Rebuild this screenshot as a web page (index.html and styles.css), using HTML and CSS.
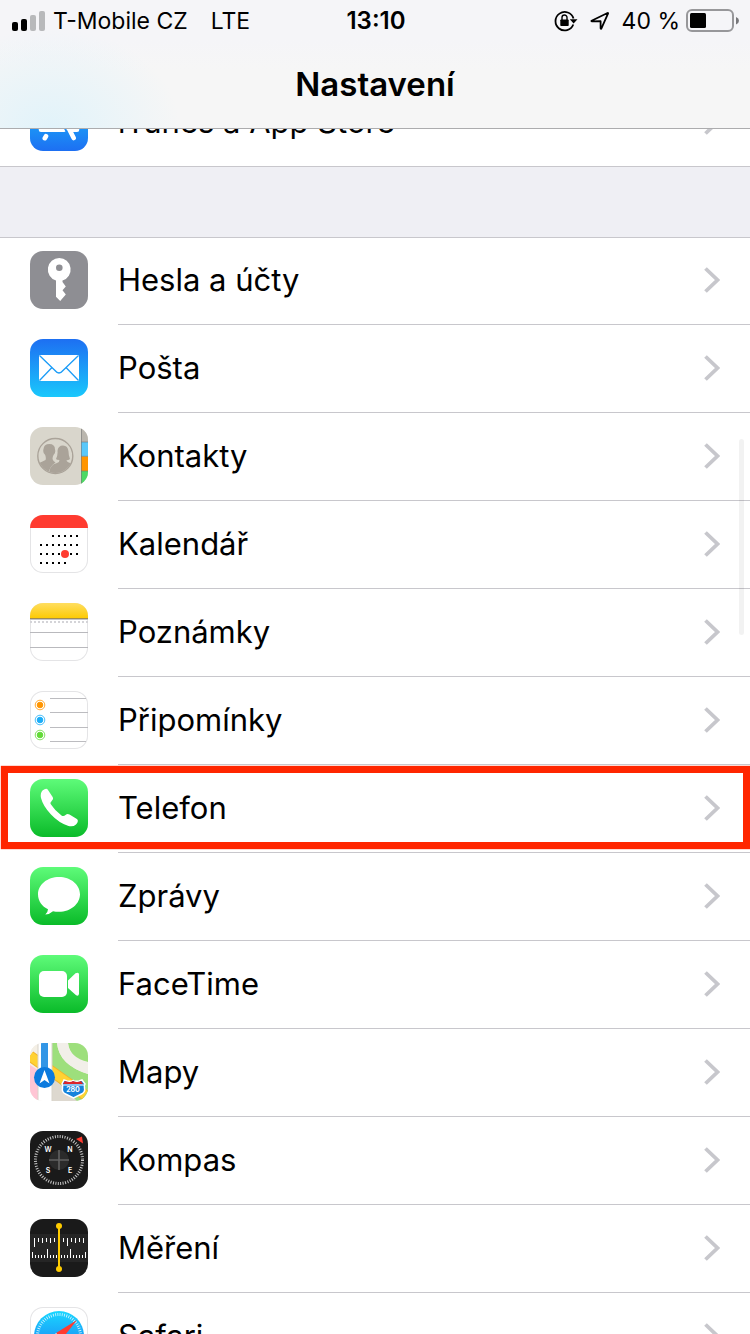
FILE: index.html
```html
<!DOCTYPE html>
<html lang="cs">
<head>
<meta charset="utf-8">
<meta name="viewport" content="width=device-width">
<title>Nastavení</title>
<link rel="stylesheet" href="styles.css">
</head>
<body>
<svg class="defs" width="0" height="0" aria-hidden="true">
  <defs>
    <linearGradient id="green" x2="0" y2="1"><stop stop-color="#5efb79"/><stop offset="1" stop-color="#0abb29"/></linearGradient>
    <linearGradient id="mail" x2="0" y2="1"><stop stop-color="#1d6ff2"/><stop offset="1" stop-color="#1ac8fc"/></linearGradient>
    <linearGradient id="store" x2="0" y2="1"><stop stop-color="#1ac8fc"/><stop offset="1" stop-color="#1d6ff2"/></linearGradient>
    <linearGradient id="yellow" x2="0" y2="1"><stop stop-color="#ffde60"/><stop offset="1" stop-color="#fdca02"/></linearGradient>
    <linearGradient id="safari" x2="0" y2="1"><stop stop-color="#19d7ff"/><stop offset="1" stop-color="#1e6ff1"/></linearGradient>
    <symbol id="chevron" viewBox="0 0 16 26"><path d="M1.500 1.500L13.500 13 1.500 24.500" fill="none" stroke="#c7c7cc" stroke-width="3.800"/></symbol>
  </defs>
</svg>

<header class="header">
  <div class="status">
    <div class="status-left">
      <svg width="34" height="20" viewBox="0 0 34 20" aria-hidden="true">
        <rect y="11" width="6" height="9" rx="2"/><rect x="9" y="8" width="6" height="12" rx="2"/>
        <rect x="18" y="4" width="6" height="16" rx="2" fill="#b8b9bb"/><rect x="27" width="6" height="20" rx="2" fill="#b8b9bb"/>
      </svg>
      <span>T-Mobile CZ</span>
      <span class="network">LTE</span>
    </div>
    <time class="time">13:10</time>
    <div class="status-right">
      <svg width="24" height="22" viewBox="0 0 24 22" aria-hidden="true">
        <path d="M19.300 14.500A9.200 9.200 0 1 1 19.500 8.500" fill="none" stroke="#000" stroke-width="1.800"/>
        <path d="M15.800 9.200H23.500L19.600 13.600Z"/>
        <rect x="6.300" y="9.500" width="8.400" height="6.500" rx=".8"/>
        <path d="M8 10V7.500a2.500 2.500 0 0 1 5 0V10" fill="none" stroke="#000" stroke-width="1.400"/>
      </svg>
      <svg class="locate" width="20" height="20" viewBox="0 0 20 20" aria-hidden="true">
        <path d="M1.600 9.700L17.500 2Q18.400 1.700 18 2.700L11.300 17.600Q10.700 18.200 10.600 17.200V10.200L2 10.400Q1 10.200 1.600 9.700Z" fill="none" stroke="#000" stroke-width="1.800" stroke-linejoin="round"/>
      </svg>
      <span>40 %</span>
      <svg class="battery" width="54" height="24" viewBox="0 0 54 24" aria-hidden="true">
        <rect x="1" y="1" width="46" height="21" rx="5" fill="none" stroke="#97979a" stroke-width="2"/>
        <rect x="4" y="4" width="16" height="15" rx="1.500"/>
        <path d="M50 8q3 1.200 3 3.700t-3 3.700z" fill="#77777a"/>
      </svg>
    </div>
  </div>
  <h1 class="title">Nastavení</h1>
</header>

<main class="content">
  <ul class="list list-cut">
    <li><a class="row" href="#store">
      <svg class="icon" viewBox="0 0 58 58"><rect width="58" height="58" fill="url(#store)"/><g stroke="#fff" stroke-width="4.600" stroke-linecap="round" fill="none"><path d="M11 36.800H34M42 36.800H47M32 10L18.500 33M16 43.200L14.800 45.200M26 10L43.700 45"/></g><path d="M33.500 33L38.500 43" stroke="#1d8bf6" stroke-width="1.500"/></svg>
      <span class="label">iTunes a App Store</span><svg class="chevron"><use href="#chevron"/></svg></a></li>
  </ul>

  <ul class="list list-main">
    <li><a class="row" href="#hesla">
      <svg class="icon" viewBox="0 0 58 58"><rect width="58" height="58" fill="#8e8e93"/><path d="M29.300 7a11.500 11.500 0 0 1 3.200 22.500v1.500l3.300 4.500-3.300 3.800 3.300 4.200-5.600 6.500-4.200-4.300V29.500A11.500 11.500 0 0 1 29.300 7Z" fill="#fff"/><circle cx="29.300" cy="16.700" r="3.300" fill="#8e8e93"/></svg>
      <span class="label">Hesla a účty</span><svg class="chevron"><use href="#chevron"/></svg></a></li>
    <li><a class="row" href="#posta">
      <svg class="icon" viewBox="0 0 58 58"><rect width="58" height="58" fill="url(#mail)"/><rect x="9" y="16" width="40" height="26" rx="1" fill="#fff"/><path d="M9.500 16.500L25 31.500Q29 36.500 33 31.500L48.500 16.500M9.500 41.500L21.500 29M48.500 41.500L36.500 29" fill="none" stroke="#1c9cf7" stroke-width="1.300"/></svg>
      <span class="label">Pošta</span><svg class="chevron"><use href="#chevron"/></svg></a></li>
    <li><a class="row" href="#kontakty">
      <svg class="icon" viewBox="0 0 58 58"><rect width="58" height="58" fill="#d9d6cc"/><path d="M51 0h7v15h-7z" fill="#bab6ae"/><path d="M51 15h7v14.500h-7z" fill="#5ac8fa"/><path d="M51 29.500h7v14.500h-7z" fill="#ff9500"/><path d="M51 44h7v14h-7z" fill="#4cd964"/><path d="M51.500 0V58M51 15h7M51 29.300h7M51 44h7" stroke="#777" stroke-opacity=".6"/>
        <clipPath id="people"><circle cx="25.300" cy="29" r="17"/></clipPath>
        <g clip-path="url(#people)" fill="#aaa399"><path d="M7 37Q13 34.500 15.500 33 16.300 31 15.200 28 12.500 26 13.500 22 14 17 19.300 17q5.700 0 5.700 5.500 1 3-1.500 5.500-1 2-1 4 1 3 3 3.500Q19 40 18.500 47L7 46Z"/><path d="M19 47q0-9 8-11 2.500-.7 2.500-3-3 0-3.500-1 2-4 1.500-8 .5-5.500 5.500-5.500t5.500 6q0 4 1.500 7.500-1.500 1.200-3.500 1.300 0 2 6.500 3.700V47z"/></g><circle cx="25.300" cy="29" r="17.500" fill="none" stroke="#aaa399" stroke-width="1.400"/></svg>
      <span class="label">Kontakty</span><svg class="chevron"><use href="#chevron"/></svg></a></li>
    <li><a class="row" href="#kalendar">
      <svg class="icon icon-light" viewBox="0 0 58 58"><path d="M0 0h58v13H0z" fill="#ff3b30"/><g stroke="#000" stroke-width="2" stroke-dasharray="2 4"><path d="M22 21H48M10 30H48M10 39H48M10 48H36"/></g><circle cx="35" cy="39" r="4" fill="#ff3b30"/></svg>
      <span class="label">Kalendář</span><svg class="chevron"><use href="#chevron"/></svg></a></li>
    <li><a class="row" href="#poznamky">
      <svg class="icon icon-light" viewBox="0 0 58 58"><path d="M0 0h58v15.500H0z" fill="url(#yellow)"/><path d="M0 15.500H58" stroke="#a08c50"/><path d="M0 16.500H58" stroke="#c4c4c8"/><path d="M0 19H58" stroke="#d4d4d8" stroke-width="2" stroke-dasharray="2 2"/><path d="M0 29.500H58M0 44.500H58" stroke="#b9b9bd"/></svg>
      <span class="label">Poznámky</span><svg class="chevron"><use href="#chevron"/></svg></a></li>
    <li><a class="row" href="#pripominky">
      <svg class="icon icon-light" viewBox="0 0 58 58"><path d="M20 7.500H56M20 21.500H58M20 36.500H58M20 50.500H56" stroke="#bcbcc0"/><g fill="#ff9500" stroke="#ff9500"><circle cx="10" cy="14" r="2.800"/><circle cx="10" cy="14" r="4.800" fill="none" stroke-width=".8"/></g><g fill="#1badf8" stroke="#1badf8"><circle cx="10" cy="29" r="2.800"/><circle cx="10" cy="29" r="4.800" fill="none" stroke-width=".8"/></g><g fill="#63da38" stroke="#63da38"><circle cx="10" cy="44" r="2.800"/><circle cx="10" cy="44" r="4.800" fill="none" stroke-width=".8"/></g></svg>
      <span class="label">Připomínky</span><svg class="chevron"><use href="#chevron"/></svg></a></li>
    <li><a class="row row-marked" href="#telefon">
      <svg class="icon" viewBox="0 0 58 58"><rect width="58" height="58" fill="url(#green)"/><path d="M12.500 11.500Q16.500 8.500 18 11L22.800 18.200Q23.700 20 22 21.500 19.800 23.500 21 25.500 25 31.800 31.500 36.500 33.700 37.800 35.500 36 37.300 34.300 39.500 35.500L46.500 39.700Q49.500 41.500 46 45.500 43 48.200 38.500 47 29 44 21 35.500 13 27 11 19 10 14 12.500 11.500Z" fill="#fff"/></svg>
      <span class="label">Telefon</span><svg class="chevron"><use href="#chevron"/></svg></a></li>
    <li><a class="row" href="#zpravy">
      <svg class="icon" viewBox="0 0 58 58"><rect width="58" height="58" fill="url(#green)"/><path d="M29 10C40.500 10 50 17.500 50 27.300S40.500 44.800 29 44.800Q25.500 44.800 23 44.200 19.500 47.300 15.300 47.600 18 45 18 42.300C12 39.500 8 34 8 27.300 8 17.500 17.500 10 29 10Z" fill="#fff"/></svg>
      <span class="label">Zprávy</span><svg class="chevron"><use href="#chevron"/></svg></a></li>
    <li><a class="row" href="#facetime">
      <svg class="icon" viewBox="0 0 58 58"><rect width="58" height="58" fill="url(#green)"/><rect x="9" y="16" width="28" height="26" rx="5" fill="#fff"/><path d="M38 25.500L45.500 18.300Q49 16.500 49 19.500V38.500Q49 42 45.500 39.800L38 33Z" fill="#fff"/></svg>
      <span class="label">FaceTime</span><svg class="chevron"><use href="#chevron"/></svg></a></li>
    <li><a class="row" href="#mapy">
      <svg class="icon" viewBox="0 0 58 58"><rect width="58" height="58" fill="#f2efe9"/><path d="M0 0h8v58H0z" fill="#f4efe5"/><path d="M0 22l8 5v31H0z" fill="#ffc5d4"/><path d="M22 0H27Q29 22 58 31V58H40L22 46Z" fill="#9ddf7c"/><path d="M22 33L47 58H22Z" fill="#ddd8cf"/><path d="M38 0A20 20 0 0 0 58 19V0Z" fill="#9ddf7c"/><path d="M27 0Q29 22 58 31V19Q40 15 38 0Z" fill="#f2efe9"/><path d="M0 13L55 52" stroke="#f1b32a" stroke-width="11"/><path d="M0 13L55 52" stroke="#ffd233" stroke-width="9"/><path d="M8 0h14v58H8z" fill="#fff"/><path d="M8 0V58M22 0V58" stroke="#d8d3ca"/><path d="M11 0h7v34h-7z" fill="#3296e6"/><circle cx="14.500" cy="34.500" r="10.500" fill="#0b7ade"/><path d="M14.500 27l5 13.500-5-3.500-5 3.500z" fill="#fff"/><path d="M34 37l3 1q6 1 6-1 1 2 6 1l3-1 3 4q-1 1-.5 4 1 4-3 6l-8 4-8-4q-4-2-3-6 .5-3-.5-4z" fill="#1583dc" stroke="#fff" stroke-width="1.500"/><path d="M35 38q5 2 8 0 4 2 8 0l2 3H33z" fill="#dc2529"/><path d="M32.500 42H54" stroke="#fff" stroke-width="1.200"/><text x="43" y="49" class="shield">280</text></svg>
      <span class="label">Mapy</span><svg class="chevron"><use href="#chevron"/></svg></a></li>
    <li><a class="row" href="#kompas">
      <svg class="icon" viewBox="0 0 58 58"><rect width="58" height="58" fill="#1a1a1a"/><circle cx="29" cy="29" r="23.500" fill="none" stroke="#c9c9c9" stroke-width="3" stroke-dasharray="1 1.461"/><circle cx="29" cy="29" r="10" fill="#2b2b2b"/><path d="M19 29H39M29 19V39" stroke="#626262" stroke-width="1.600"/><path d="M52 5.500L53 12.500 46 8Z" fill="#ff3b30"/><g class="compass"><text x="18" y="21">W</text><text x="40" y="21">N</text><text x="18" y="42">S</text><text x="40" y="42">E</text></g></svg>
      <span class="label">Kompas</span><svg class="chevron"><use href="#chevron"/></svg></a></li>
    <li><a class="row" href="#mereni">
      <svg class="icon" viewBox="0 0 58 58"><rect width="58" height="58" fill="#1a1a1a"/><path d="M0 15h58v28H0z" fill="#252525"/><path d="M4.500 19v9M8.500 19v4M12.500 19v5M16.500 19v4M20.500 19v5M24.500 19v4M33.500 19v4M37.500 19v8M41.500 19v4M45.500 19v5M49.500 19v4M53.500 19v5M2.500 39v-6M5.500 39v-3M8.500 39v-3M11.500 39v-3M14.500 39v-3M17.500 39v-9M20.500 39v-3M23.500 39v-3M26.500 39v-3M31.500 39v-3M34.500 39v-3M37.500 39v-3M40.500 39v-9M43.500 39v-3M46.500 39v-3M49.500 39v-3M52.500 39v-3M55.500 39v-6" stroke="#fff"/><path d="M29 7V50" stroke="#fc0" stroke-width="2"/><circle cx="29" cy="7" r="3" fill="#fc0"/><circle cx="29" cy="50" r="3" fill="#fc0"/></svg>
      <span class="label">Měření</span><svg class="chevron"><use href="#chevron"/></svg></a></li>
    <li><a class="row" href="#safari">
      <svg class="icon icon-light" viewBox="0 0 58 58"><circle cx="29" cy="29" r="25" fill="url(#safari)"/><circle cx="29" cy="29" r="21.500" fill="none" stroke="#d8f5ff" stroke-width="3" stroke-dasharray=".8 1.452"/><path d="M47 13L32 32 26 26Z" fill="#ff3b30"/><path d="M26 26L32 32 11 45Z" fill="#fff"/></svg>
      <span class="label">Safari</span><svg class="chevron"><use href="#chevron"/></svg></a></li>
  </ul>
  <div class="scrollbar" aria-hidden="true"></div>
</main>
</body>
</html>
```

FILE: styles.css
```css
* { box-sizing: border-box; }

body {
  margin: 0;
  height: 100vh;
  display: flex;
  flex-direction: column;
  overflow: hidden;
  background: #efeff4;
  color: #000;
  font-family: Inter, "Liberation Sans", sans-serif;
}

.defs { position: absolute; }

.header {
  flex: none;
  border-bottom: 1px solid #acacae;
  background:
    radial-gradient(ellipse 130px 100px at 50px 128px, #e1f3fa, rgba(225, 243, 250, 0)),
    linear-gradient(#f5f5f8 40px, #f6f6f6 70px);
}

.status {
  display: grid;
  grid-template-columns: 1fr auto 1fr;
  align-items: center;
  height: 42px;
  padding: 0 10px 0 12px;
  font-size: 23px;
  line-height: 42px;
}

.status-left,
.status-right {
  display: flex;
  align-items: center;
  white-space: nowrap;
}

.status-left { gap: 7px; }
.status-right { justify-content: flex-end; gap: 6px; }
.network { margin-left: 16px; }
.locate { margin: 0 6px; }

.time {
  font-size: 24px;
  font-weight: 600;
}

.title {
  margin: 0;
  height: 86px;
  font-size: 33px;
  font-weight: 600;
  line-height: 84px;
  text-align: center;
}

.content {
  position: relative;
  flex: 1;
  min-height: 0;
  overflow: hidden;
}

.list {
  margin: 0;
  padding: 0;
  list-style: none;
  background: #fff;
}

.list-cut {
  display: flex;
  flex-direction: column;
  justify-content: flex-end;
  height: 38px;
  overflow: hidden;
  border-bottom: 1px solid #c8c7cc;
}

.list-main {
  position: relative;
  margin-top: 70px;
}

.list-main::before {
  content: "";
  position: absolute;
  inset: 0 0 auto;
  height: 1px;
  background: #c8c7cc;
}

.row {
  position: relative;
  display: flex;
  align-items: flex-start;
  height: 88px;
  padding-left: 30px;
  color: inherit;
  text-decoration: none;
}

.list-cut .row { height: 87px; }

.icon {
  flex: none;
  width: 58px;
  height: 58px;
  margin: 14px 30px 0 0;
  border-radius: 13px;
  overflow: hidden;
}

.icon-light {
  background: #fff;
  box-shadow: inset 0 0 0 1px #e4e4e6;
}

.label {
  flex: 1;
  height: 88px;
  border-bottom: 1px solid #c8c7cc;
  font-size: 31px;
  line-height: 86px;
}

.list-cut .label { border-bottom: 0; }

.chevron {
  position: absolute;
  top: 30px;
  right: 30px;
  width: 16px;
  height: 26px;
}

.row-marked::after {
  content: "";
  position: absolute;
  inset: 1px 0 4px 1px;
  border: 7px solid #ff2600;
  box-shadow: 0 0 1px #ff2600;
}

.scrollbar {
  position: absolute;
  top: 310px;
  right: 6px;
  width: 5px;
  height: 196px;
  border-radius: 3px;
  background: rgba(0, 0, 0, .05);
}

.shield {
  fill: #fff;
  font-size: 7px;
  font-weight: 700;
  text-anchor: middle;
}

.compass {
  fill: #fff;
  font-size: 7px;
  font-weight: 600;
  text-anchor: middle;
}
```
